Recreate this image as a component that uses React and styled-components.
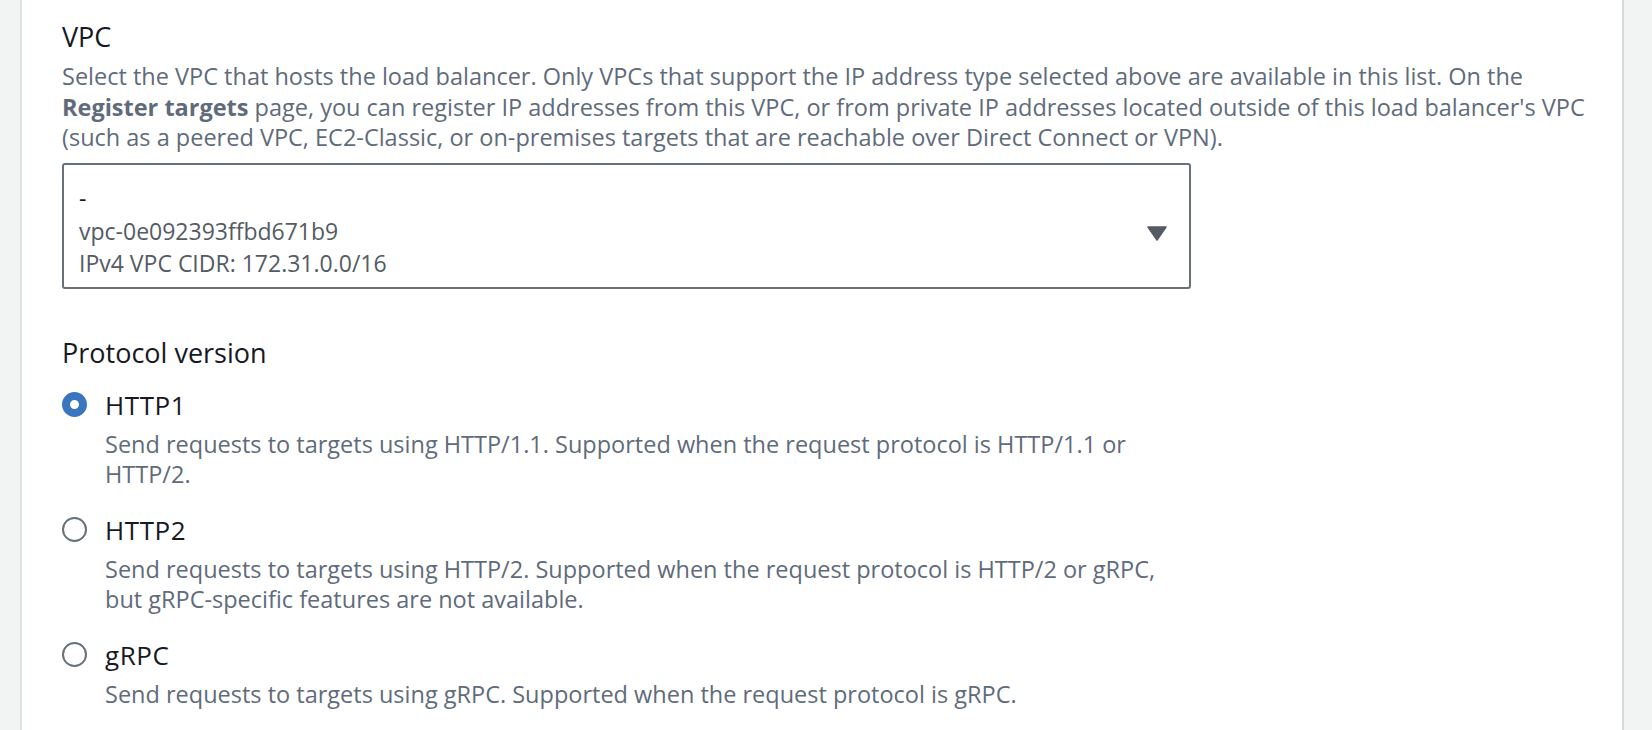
import React from 'react';
import styled, { createGlobalStyle } from 'styled-components';

const Global = createGlobalStyle`
  html, body { margin: 0; padding: 0; background: #f2f3f3; }
  body {
    font-family: "Open Sans", "Noto Sans", sans-serif;
    -webkit-font-smoothing: antialiased;
  }
  #root { height: 730px; }
`;

const Page = styled.div`
  display: flex;
  height: 730px;
  overflow: hidden;
  padding: 0 28px 0 20px;
  box-sizing: border-box;
`;

const Panel = styled.main`
  flex: 1;
  background: #ffffff;
  border-left: 2px solid #dfe2e3;
  border-right: 2px solid #d5d9da;
  padding: 21px 20px 0 40px;
  display: flex;
  flex-direction: column;
`;

const Field = styled.section`
  display: flex;
  flex-direction: column;
  margin-top: ${p => p.$top || 0}px;
`;

const Label = styled.h2`
  margin: 0;
  font-size: 27px;
  line-height: 32px;
  font-weight: 400;
  color: #16191f;
`;

const Description = styled.p`
  margin: 8px 0 0 0;
  max-width: 1540px;
  font-size: 23.5px;
  line-height: 30.5px;
  color: #5f6b7a;
  b { font-weight: 700; }
`;

const Select = styled.div`
  margin-top: 10px;
  width: 1129px;
  height: 126px;
  box-sizing: border-box;
  border: 2px solid #687078;
  border-radius: 3px;
  padding: 16px 22px 0 15px;
  display: flex;
  align-items: center;
  justify-content: space-between;
`;

const SelectText = styled.div`
  display: flex;
  flex-direction: column;
  align-self: flex-start;
`;

const Primary = styled.span`
  font-size: 23px;
  line-height: 34px;
  color: #16191f;
`;

const Secondary = styled.span`
  font-size: 23px;
  line-height: 32px;
  color: #545b64;
`;

const Caret = styled.svg`
  width: 20px;
  height: 15px;
  flex: none;
`;

const RadioGroup = styled.div`
  display: flex;
  flex-direction: column;
  gap: 25px;
  margin-top: 20px;
`;

const RadioItem = styled.label`
  display: grid;
  grid-template-columns: 25px 1fr;
  column-gap: 18px;
  align-items: start;
`;

const RadioCircle = styled.span`
  width: 25px;
  height: 25px;
  box-sizing: border-box;
  border-radius: 50%;
  margin-top: 3.5px;
  background: #fff;
  border: ${p => (p.$checked ? '8px solid #3a76bf' : '2px solid #687078')};
`;

const RadioBody = styled.div`
  display: flex;
  flex-direction: column;
  gap: 8px;
  max-width: 1087px;
`;

const RadioLabel = styled.span`
  font-size: 26px;
  line-height: 32px;
  letter-spacing: 0.6px;
  color: #16191f;
`;

const RadioDesc = styled.span`
  font-size: 23.5px;
  line-height: 30px;
  color: #5f6b7a;
`;

const options = [
  {
    label: 'HTTP1',
    desc: 'Send requests to targets using HTTP/1.1. Supported when the request protocol is HTTP/1.1 or HTTP/2.',
    checked: true,
  },
  {
    label: 'HTTP2',
    desc: 'Send requests to targets using HTTP/2. Supported when the request protocol is HTTP/2 or gRPC, but gRPC-specific features are not available.',
  },
  {
    label: 'gRPC',
    desc: 'Send requests to targets using gRPC. Supported when the request protocol is gRPC.',
  },
];

export default function App() {
  return (
    <>
      <Global />
      <Page>
        <Panel>
          <Field>
            <Label>VPC</Label>
            <Description>
              Select the VPC that hosts the load balancer. Only VPCs that support the IP address type selected above are available in this list. On the{' '}
              <b>Register targets</b> page, you can register IP addresses from this VPC, or from private IP addresses located outside of this load balancer's VPC (such as a peered VPC, EC2-Classic, or on-premises targets that are reachable over Direct Connect or VPN).
            </Description>
            <Select>
              <SelectText>
                <Primary>-</Primary>
                <Secondary>vpc-0e092393ffbd671b9</Secondary>
                <Secondary>IPv4 VPC CIDR: 172.31.0.0/16</Secondary>
              </SelectText>
              <Caret viewBox="0 0 20 15">
                <path d="M1 1 H19 L10 14 Z" fill="#545b64" stroke="#545b64" strokeWidth="1.5" strokeLinejoin="round" />
              </Caret>
            </Select>
          </Field>
          <Field $top={48}>
            <Label>Protocol version</Label>
            <RadioGroup>
              {options.map(o => (
                <RadioItem key={o.label}>
                  <RadioCircle $checked={o.checked} />
                  <RadioBody>
                    <RadioLabel>{o.label}</RadioLabel>
                    <RadioDesc>{o.desc}</RadioDesc>
                  </RadioBody>
                </RadioItem>
              ))}
            </RadioGroup>
          </Field>
        </Panel>
      </Page>
    </>
  );
}
